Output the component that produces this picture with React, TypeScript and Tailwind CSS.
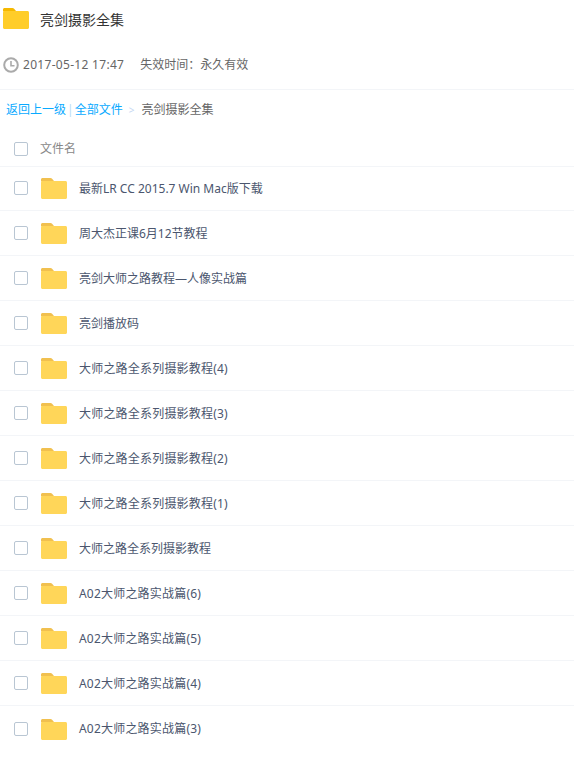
const files = [
  '最新LR CC 2015.7 Win Mac版下载',
  '周大杰正课6月12节教程',
  '亮剑大师之路教程—人像实战篇',
  '亮剑播放码',
  '大师之路全系列摄影教程(4)',
  '大师之路全系列摄影教程(3)',
  '大师之路全系列摄影教程(2)',
  '大师之路全系列摄影教程(1)',
  '大师之路全系列摄影教程',
  'A02大师之路实战篇(6)',
  'A02大师之路实战篇(5)',
  'A02大师之路实战篇(4)',
  'A02大师之路实战篇(3)',
]

function FolderIcon({ tab, body }: { tab: string; body: string }) {
  return (
    <svg width="26" height="21" viewBox="0 0 26 21" className="shrink-0">
      <path d="M0 1.500C0 .7.7 0 1.500 0h8c.6 0 1.200.3 1.600.8L13 3H1L0 4z" fill={tab} />
      <path d="M0 4.500C0 3.700.7 3 1.500 3h23c.8 0 1.500.7 1.500 1.500v15c0 .8-.7 1.500-1.500 1.500h-23C.7 21 0 20.300 0 19.500z" fill={body} />
    </svg>
  )
}

function Checkbox() {
  return <div className="w-[14px] h-[14px] shrink-0 rounded-[2px] border border-[#b9c6d3] bg-white" />
}

export default function App() {
  return (
    <div className="w-[574px] h-[757px] overflow-hidden bg-white text-[12px] font-['Noto_Sans','Noto_Sans_CJK_SC',sans-serif]">
      <div className="h-[90px] border-b border-[#f3f5f8]">
        <div className="flex items-center pl-[3px] pt-[8px] h-[29px]">
          <FolderIcon tab="#f5b800" body="#ffcd29" />
          <h1 className="ml-[11px] mt-[2px] text-[14px] leading-[26px] text-[#333]">亮剑摄影全集</h1>
        </div>
        <div className="flex items-center pl-[3px] mt-[27px] text-[#666]">
          <svg width="16" height="16" viewBox="0 0 16 16" fill="none" stroke="#aaaaaa" strokeWidth="2" className="shrink-0">
            <circle cx="8" cy="8" r="6.800" />
            <path d="M8 4v4.800h3.500" strokeWidth="1.600" />
          </svg>
          <span className="ml-[4px] tracking-[0.3px]">2017-05-12 17:47</span>
          <span className="ml-[16px]">失效时间：永久有效</span>
        </div>
      </div>

      <div className="flex items-center h-[40px] pl-[6px] text-[#666]">
        <a className="text-[#09aaff]">返回上一级</a>
        <span className="mx-[1px] text-[#b9dcf5]">|</span>
        <a className="text-[#09aaff]">全部文件</a>
        <span className="ml-[6px] mr-[7px] text-[#c5d8f3] text-[10px]">&gt;</span>
        <span>亮剑摄影全集</span>
      </div>

      <div className="flex items-center h-[37px] pl-[14px] pt-[2px] text-[#888] border-b border-[#f3f5f8]">
        <Checkbox />
        <span className="ml-[12px]">文件名</span>
      </div>

      {files.map((name, i) => (
        <div key={name} className={i === 0 ? 'flex items-center h-[44px] pl-[14px] border-b border-[#f3f5f8]' : 'flex items-center h-[45px] pl-[14px] pt-[1px] border-b border-[#f3f5f8] last:border-b-0'}>
          <div className="mb-[1px]">
            <Checkbox />
          </div>
          <div className="ml-[13px]">
            <FolderIcon tab="#f1c04f" body="#ffd659" />
          </div>
          <span className={name.includes('(') ? 'ml-[12px] text-[#4b566e] tracking-[0.2px]' : 'ml-[12px] text-[#4b566e]'}>{name}</span>
        </div>
      ))}
    </div>
  )
}
